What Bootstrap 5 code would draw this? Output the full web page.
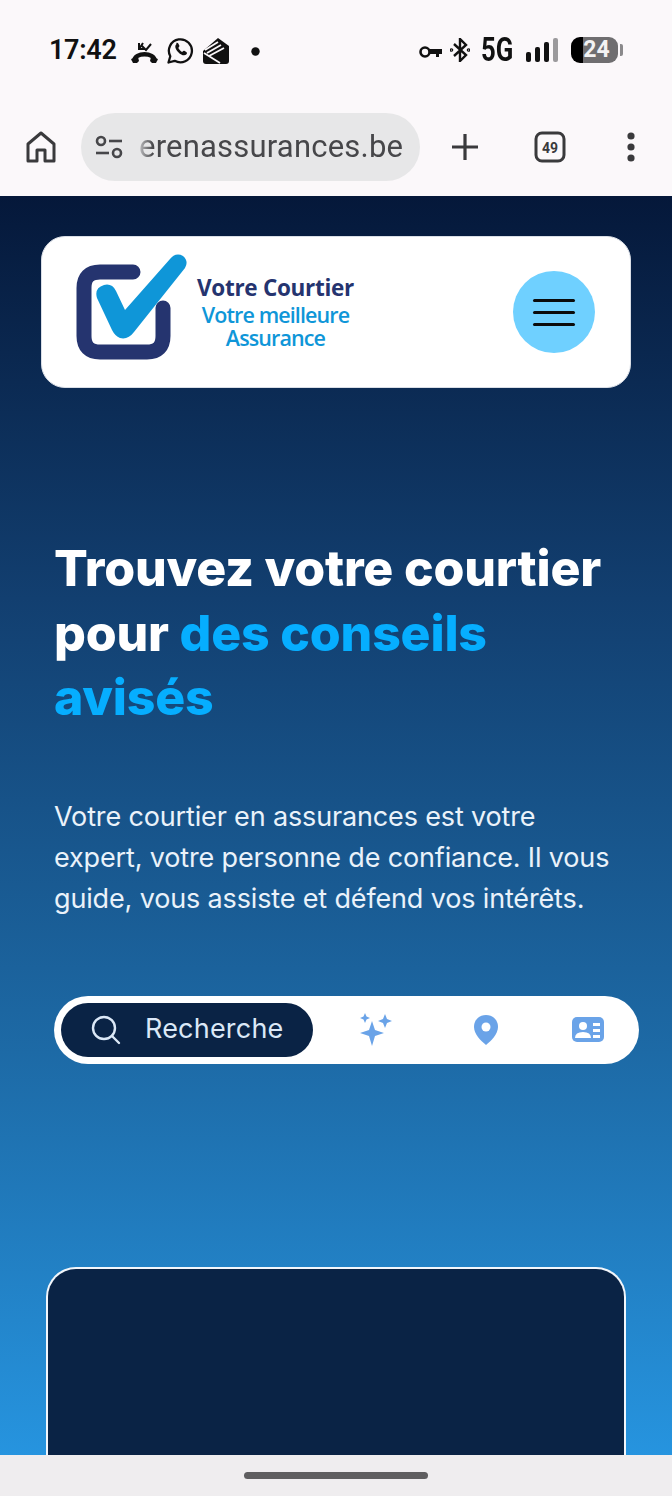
<!DOCTYPE html>
<html lang="fr">
<head>
    <meta charset="UTF-8">
    <meta name="viewport" content="width=device-width, initial-scale=1.0">
    <title>Votre Courtier</title>
    <link href="https://cdn.jsdelivr.net/npm/bootstrap@5.3.0/dist/css/bootstrap.min.css" rel="stylesheet">
    <style>
        html, body { height: 100%; }
        body {
            font-family: "Inter", "Liberation Sans", sans-serif;
            background: #fbf8fa;
            overflow: hidden;
        }
        .phone { height: 1496px; }

        /* status bar */
        .status-bar {
            height: 100px;
            padding: 36px 49px 0 49px;
            color: #111;
            background: #fbf8fa;
        }
        .clock { font: 600 27px/28px "Roboto", sans-serif; letter-spacing: -.3px; width: 82px; }
        .ic-call { margin-top: 6px; margin-right: 9px; }
        .ic-wa { margin-top: 1px; margin-right: 9px; }
        .ic-wallet { margin-top: 2px; margin-right: 22px; }
        .ic-dot { margin-top: 11px; }
        .ic-key { margin-top: 9px; margin-right: 8px; }
        .ic-bt { margin-top: 2px; margin-right: 11px; }
        .net-label {
            font: 700 33px/28px "Roboto", sans-serif; width: 44px;
            transform: scaleX(.78); transform-origin: left;
        }
        .ic-signal { margin-top: 2px; margin-right: 12px; }
        .battery {
            width: 47px; height: 26px; border-radius: 9px; margin-top: 1px;
            background: linear-gradient(90deg, #000 26%, #6f6e70 26%);
            color: #f3f3f3; font: 700 23px/26px "Roboto", sans-serif;
            text-align: center; padding-left: 4px;
        }
        .battery-tip { width: 3px; height: 12px; margin: 8px 0 0 2px; background: #8a898b; border-radius: 0 2px 2px 0; }

        /* browser bar */
        .browser-bar { height: 96px; padding: 13px 0 15px 26px; background: #fbf8fa; }
        .url-pill {
            width: 339px; height: 68px; border-radius: 34px;
            background: #e7e7e8; margin: 0 30px 0 25px;
            padding: 0 14px;
        }
        .url-text {
            font: 400 31px/68px "Roboto", sans-serif; color: #47474a;
            width: 268px; margin-left: 16px; overflow: hidden; white-space: nowrap;
            letter-spacing: .2px;
            -webkit-mask-image: linear-gradient(90deg, rgba(0,0,0,.25) 0, #000 14px);
            mask-image: linear-gradient(90deg, rgba(0,0,0,.25) 0, #000 14px);
        }
        .ic-tabs { margin-left: 54px; }
        .ic-more { margin-left: 60px; }

        /* page */
        .page-main {
            flex: 1 1 auto; min-height: 0; overflow: hidden;
            background: linear-gradient(180deg, #05183a 0%, #123f70 32%, #1d6aa6 68%, #2694df 100%);
            padding: 40px 47px 0 41px;
        }
        .site-header {
            width: 590px; height: 152px; background: #fff;
            border-radius: 24px; border: 1px solid #d9dee6;
            padding: 0 35px 0 34px;
        }
        .logo-mark { margin-top: -8px; }
        .logo-text { font-family: "Open Sans", sans-serif; text-align: center; margin-left: 9px; margin-top: -2px; }
        .logo-title { font-size: 22.5px; line-height: 30px; font-weight: 700; color: #25346f; letter-spacing: -.3px; }
        .logo-sub { font-size: 21.5px; line-height: 23.5px; font-weight: 600; color: #0f96d8; letter-spacing: -.9px; }
        .menu-btn {
            width: 82px; height: 82px; border-radius: 50%;
            background: #6fd0ff; border: 0; padding: 0;
        }
        .menu-btn span { display: block; width: 42px; height: 3px; background: #0b0b0b; margin: 4.5px auto; border-radius: 2px; }

        .hero-title {
            margin: 148px 0 0 13px; font-weight: 800; font-size: 50px;
            line-height: 64.5px; letter-spacing: -.2px; color: #fff;
        }
        .hero-title em { font-style: normal; color: #06aeff; }
        .hero-text {
            width: 565px;
            margin: 66px 0 0 13px; color: #eaf2fa; font-size: 27px;
            line-height: 41px; font-weight: 400; letter-spacing: -.15px;
        }
        .search-tabs {
            width: 585px; height: 68px; margin: 77px 0 0 13px;
            background: #fff; border-radius: 34px; padding: 7px;
        }
        .tab-active {
            width: 252px; height: 54px; border-radius: 27px;
            background: #0a2345; color: #dbe8f7;
            font-size: 27px; letter-spacing: .2px; padding-left: 30px; gap: 24px;
        }
        .ic-spark { margin-left: 46px; }
        .ic-pin { margin-left: 80px; }
        .ic-card { margin-left: 73px; }
        .promo-card {
            width: 580px; height: 400px; margin: 203px 0 0 5px;
            background: #0a2345; border: 2px solid #f2f6fb; border-bottom: 0;
            border-radius: 30px 30px 0 0;
        }

        /* nav gesture */
        .gesture-bar { height: 41px; background: #efedef; }
        .gesture-handle { width: 184px; height: 7px; border-radius: 4px; background: #5f5e60; margin-top: 17px; }
    </style>
</head>
<body>
<div class="phone d-flex flex-column">
    <div class="status-bar d-flex align-items-start flex-shrink-0">
        <span class="clock">17:42</span>
        <svg class="ic-call" width="27" height="21" viewBox="0 0 27 21" fill="none">
            <path d="M3 19c1-9 20-9 21 0" stroke="#111" stroke-width="4.500"/>
            <path d="M0 17l7-2 1 4-2 2H2zM27 17l-7-2-1 4 2 2h4z" fill="#111"/>
            <path d="M8 1v6h6M8 7l4-6M11 4l4 4 5-6" stroke="#111" stroke-width="2"/>
        </svg>
        <svg class="ic-wa" width="27" height="27" viewBox="0 0 27 27" fill="none">
            <path d="M1.500 25.500l1.800-6.200a11.500 11.500 0 1 1 4.400 4.500z" stroke="#111" stroke-width="2.300" stroke-linejoin="round"/>
            <path d="M9.500 7c-2 1.800-1.500 4.800 1.800 8.200s6.500 4 8.200 2c.8-1 .5-1.700-.2-2.200l-2-1.200c-.6-.3-1.100 0-1.500.6-.4.500-.9.500-1.600 0-1-.7-2-1.800-2.600-2.900-.3-.6-.2-1 .3-1.400.6-.5.700-1 .4-1.600l-1-1.900c-.5-.8-1.300-1-2-.5z" fill="#111"/>
        </svg>
        <svg class="ic-wallet" width="26" height="26" viewBox="0 0 26 26" fill="#111">
            <path d="M0 13L15 0l11 8v15q0 3-3 3H3q-3 0-3-3z"/>
            <path d="M2 12L15 4M4 15L18 7M6 18L21 10M1 15l16 10" stroke="#fbf8fa" stroke-width="1.800" fill="none"/>
        </svg>
        <svg class="ic-dot" width="9" height="9" viewBox="0 0 9 9"><circle cx="4.500" cy="4.500" r="4.200" fill="#111"/></svg>
        <div class="ms-auto d-flex align-items-start">
            <svg class="ic-key" width="23" height="14" viewBox="0 0 23 14" fill="none">
                <circle cx="6" cy="7" r="4.500" stroke="#111" stroke-width="2.600"/>
                <path d="M10 4h13v5h-3v3h-3V9h-7z" fill="#111"/>
            </svg>
            <svg class="ic-bt" width="20" height="24" viewBox="0 0 20 24" fill="none" stroke="#111" stroke-width="2.400">
                <path d="M4 6l12 11-6 6V1l6 6L4 18"/>
                <circle cx="1.500" cy="12" r=".6"/><circle cx="18.500" cy="12" r=".6"/>
            </svg>
            <span class="net-label">5G</span>
            <svg class="ic-signal" width="34" height="24" viewBox="0 0 34 24">
                <rect x="1" y="14" width="5" height="10" rx="2" fill="#111"/>
                <rect x="10" y="9" width="5" height="15" rx="2" fill="#111"/>
                <rect x="19" y="4" width="5" height="20" rx="2" fill="#111"/>
                <rect x="28" y="0" width="5" height="24" rx="2" fill="#9b9a9c"/>
            </svg>
            <div class="battery">24</div>
            <div class="battery-tip"></div>
        </div>
    </div>

    <div class="browser-bar d-flex align-items-center flex-shrink-0">
        <svg width="30" height="32" viewBox="0 0 30 32" fill="none" stroke="#3a3a3c" stroke-width="3">
            <path d="M2 30V13L15 2l13 11v17h-9V19h-8v11z" stroke-linejoin="round"/>
        </svg>
        <div class="url-pill d-flex align-items-center flex-shrink-0">
            <svg width="28" height="24" viewBox="0 0 28 24" fill="none" stroke="#47474a" stroke-width="2.600" class="flex-shrink-0">
                <circle cx="6" cy="6" r="4"/><path d="M14 6h13"/>
                <path d="M1 18h13"/><circle cx="22" cy="18" r="4"/>
            </svg>
            <div class="url-text">erenassurances.be</div>
        </div>
        <svg width="30" height="30" viewBox="0 0 30 30" fill="none" stroke="#3a3a3c" stroke-width="3.200">
            <path d="M15 2v26M2 15h26"/>
        </svg>
        <svg class="ic-tabs" width="32" height="32" viewBox="0 0 32 32" fill="none">
            <rect x="2" y="2" width="28" height="28" rx="6" stroke="#3a3a3c" stroke-width="3"/>
            <text x="16" y="21.500" text-anchor="middle" font-family="Roboto, sans-serif" font-weight="700" font-size="14" fill="#3a3a3c">49</text>
        </svg>
        <svg class="ic-more" width="10" height="30" viewBox="0 0 10 30" fill="#3a3a3c">
            <circle cx="5" cy="4" r="3.600"/><circle cx="5" cy="15" r="3.600"/><circle cx="5" cy="26" r="3.600"/>
        </svg>
    </div>

    <main class="page-main">
        <header class="site-header d-flex align-items-center">
            <svg class="logo-mark flex-shrink-0" width="112" height="108" viewBox="76 254 112 108" fill="none">
                <path d="M133 272H100q-16 0-16 16v48q0 16 16 16h47q16 0 16-16v-28" stroke="#25346f" stroke-width="15" stroke-linecap="round"/>
                <path d="M97 298Q94 288 104 285Q112 283 116 291L125 310L170 259Q176 252 183 256Q189 261 185 268L134 332Q128 340 120 338Q115 336 112 330Z" fill="#0f96d8"/>
            </svg>
            <div class="logo-text">
                <div class="logo-title">Votre Courtier</div>
                <div class="logo-sub">Votre meilleure<br>Assurance</div>
            </div>
            <button class="menu-btn ms-auto d-flex flex-column justify-content-center" type="button" aria-label="Menu">
                <span></span><span></span><span></span>
            </button>
        </header>

        <h1 class="hero-title">Trouvez votre courtier<br>pour <em>des conseils<br>avisés</em></h1>
        <p class="hero-text">Votre courtier en assurances est votre expert, votre personne de confiance. Il vous guide, vous assiste et défend vos intérêts.</p>

        <div class="search-tabs d-flex align-items-center">
            <div class="tab-active d-flex align-items-center flex-shrink-0">
                <svg width="30" height="30" viewBox="0 0 30 30" fill="none" stroke="#dbe8f7" stroke-width="2.400">
                    <circle cx="13" cy="13" r="11"/><path d="M21 21l7 7" stroke-linecap="round"/>
                </svg>
                <span>Recherche</span>
            </div>
            <svg class="ic-spark" width="34" height="34" viewBox="0 0 34 34" fill="#6aa3e8">
                <path d="M13 8l3 9 9 3-9 3-3 10-3-10-9-3 9-3z"/>
                <path d="M26 1l2 5 5 2-5 2-2 5-2-5-5-2 5-2zM6 0l1.500 3.500L11 5 7.500 6.500 6 10 4.500 6.500 1 5l3.500-1.500z"/>
            </svg>
            <svg class="ic-pin" width="26" height="30" viewBox="0 0 26 30">
                <path d="M13 0c7 0 12 5 12 12 0 7-7 14-12 18C8 26 1 19 1 12 1 5 6 0 13 0z" fill="#6aa3e8"/>
                <circle cx="13" cy="12" r="4.500" fill="#fff"/>
            </svg>
            <svg class="ic-card" width="32" height="25" viewBox="0 0 32 25">
                <rect width="32" height="25" rx="5" fill="#6aa3e8"/>
                <circle cx="11" cy="9" r="4" fill="#fff"/>
                <path d="M3 21q0-6 8-6t8 6z" fill="#fff"/>
                <path d="M21 6h7v3h-7zM21 12h7v3h-7zM21 18h7v3h-7z" fill="#fff"/>
            </svg>
        </div>

        <div class="promo-card"></div>
    </main>

    <div class="gesture-bar d-flex justify-content-center flex-shrink-0">
        <div class="gesture-handle"></div>
    </div>
</div>
<script src="https://cdn.jsdelivr.net/npm/bootstrap@5.3.0/dist/js/bootstrap.bundle.min.js"></script>
</body>
</html>
